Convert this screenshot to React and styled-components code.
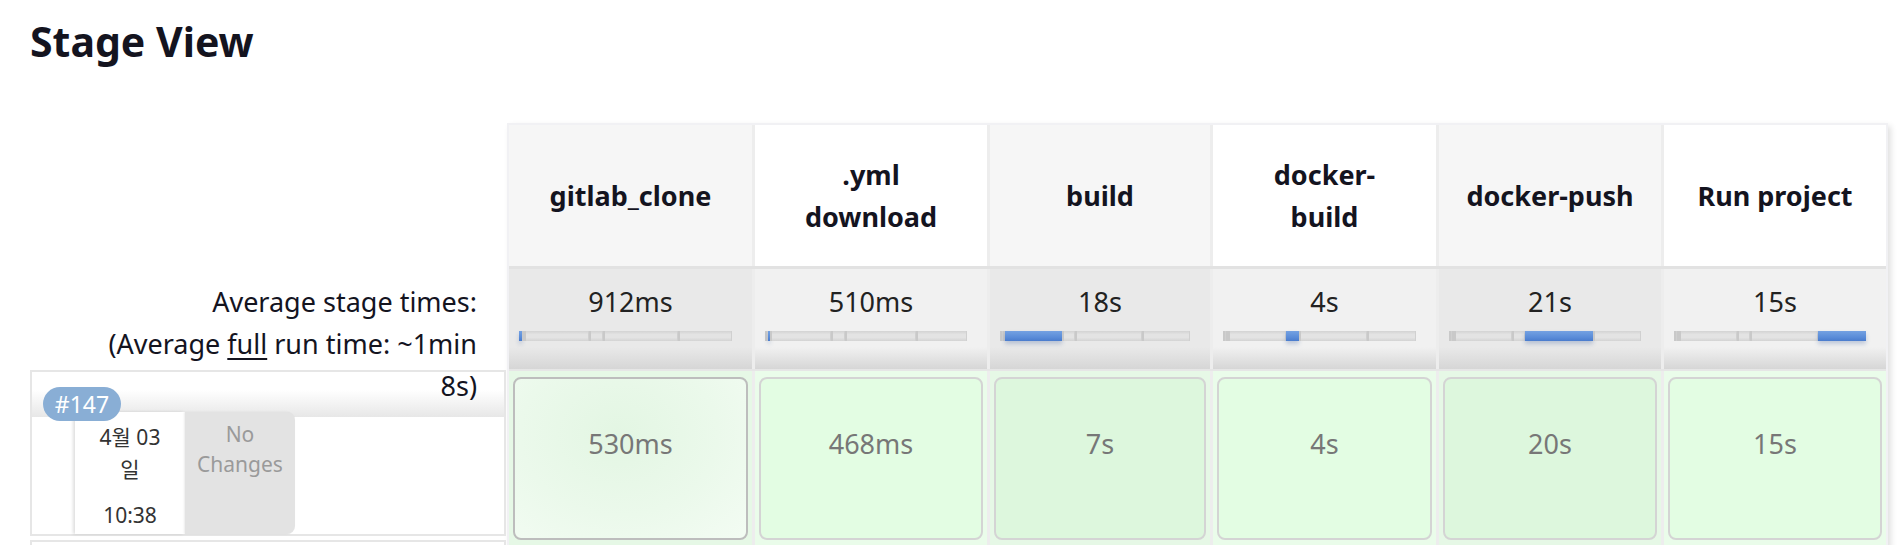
import React from 'react';
import styled, { createGlobalStyle, css } from 'styled-components';

const GlobalStyle = createGlobalStyle`
    body {
        margin: 0;
        background: #fff;
        font-family: "Noto Sans", "Noto Sans CJK KR", sans-serif;
        color: #14141f;
    }
`;

// head: how the stage name wraps in the header (the original column is just narrow enough)
const stages = [
    { name: 'gitlab_clone', head: ['gitlab_clone'], avg: '912ms', ms: 912, run: '530ms', width: 243 },
    { name: '.yml download', head: ['.yml', 'download'], avg: '510ms', ms: 510, run: '468ms', width: 232 },
    { name: 'build', head: ['build'], avg: '18s', ms: 18000, run: '7s', width: 220 },
    { name: 'docker-build', head: ['docker-', 'build'], avg: '4s', ms: 4000, run: '4s', width: 223 },
    { name: 'docker-push', head: ['docker-push'], avg: '21s', ms: 21000, run: '20s', width: 222 },
    { name: 'Run project', head: ['Run project'], avg: '15s', ms: 15000, run: '15s', width: 222 },
];

const total = stages.reduce((sum, s) => sum + s.ms, 0);

const columns = css`
    display: grid;
    grid-template-columns: ${stages.map(s => s.width + 'px').join(' ')};
    column-gap: 3px;
`;

let Page = styled.div`
    padding: 17px 0 0 30px;
`;

let Title = styled.h2`
    margin: 0;
    font-size: 41px;
    line-height: 48px;
    font-weight: 700;
`;

let Body = styled.div`
    display: flex;
    align-items: flex-start;
    margin-top: 58px;
`;

let Left = styled.div`
    flex: none;
    width: 477px;
    display: flex;
    flex-direction: column;
`;

let Spacer = styled.div`
    height: 146px;
`;

let AvgLabel = styled.div`
    position: relative;
    z-index: 1;
    height: 100px;
    box-sizing: border-box;
    padding: 12px 30px 0 0;
    text-align: right;
    font-size: 27px;
    line-height: 42px;
    white-space: nowrap;

    u { text-decoration-thickness: 2px; text-underline-offset: 4px; }
`;

let History = styled.div`
    position: relative;
    margin: 1px 1px 0 0;
    height: 166px;
    box-sizing: border-box;
    border: 2px solid #e6e6e6;
`;

let NextHistory = styled(History)`
    margin-top: 4px;
    height: 60px;
`;

let Strip = styled.div`
    height: 45px;
    background: linear-gradient(to bottom, #fff 0%, #fff 40%, #e7e7e7 100%);
`;

let HistoryBody = styled.div`
    display: flex;
    margin-top: -5px;
    padding-left: 43px;
    height: 122px;
`;

let DateCell = styled.div`
    width: 110px;
    background: #fff;
    box-shadow: -2px 0 3px rgba(0, 0, 0, 0.13);
    padding-top: 9px;
    text-align: center;
    font-size: 21px;
    line-height: 32px;
    color: #333;
`;

let Time = styled.div`
    margin-top: 14px;
`;

let ChangesCell = styled.div`
    width: 110px;
    background: #e3e3e3;
    border-radius: 0 8px 8px 0;
    box-shadow: -1px 0 2px rgba(0, 0, 0, 0.08);
    padding-top: 7px;
    text-align: center;
    font-size: 21px;
    line-height: 30px;
    color: #9a9a9a;
`;

let Badge = styled.div`
    position: absolute;
    z-index: 2;
    left: 11px;
    top: 15px;
    width: 78px;
    height: 34px;
    border-radius: 17px;
    background: #89aed5;
    color: #fff;
    font-size: 23px;
    line-height: 34px;
    text-align: center;
`;

let Table = styled.div`
    flex: none;
    border: 2px solid #f1f1f4;
    background: #ededed;
    box-shadow: 3px 3px 6px rgba(0, 0, 0, 0.12);
`;

let HeaderRow = styled.div`
    ${columns}
    height: 141px;
    border-bottom: 3px solid #e2e2e2;
`;

let HeaderCell = styled.div`
    display: flex;
    flex-direction: column;
    align-items: center;
    justify-content: center;
    padding: 0 22px;
    background: ${props => props.$odd ? '#f6f6f6' : '#fff'};
    text-align: center;
    font-size: 27px;
    font-weight: 700;
    line-height: 42px;
`;

let AvgRow = styled.div`
    ${columns}
    height: 100px;
    border-bottom: 2px solid #e6e6e6;
`;

let AvgCell = styled.div`
    padding-top: 15px;
    background: ${props => {
        let base = props.$odd ? '#e9e9e9' : '#f1f1f1';
        return `linear-gradient(to bottom, ${base} 0%, ${base} 78%, #d6d6d6 100%)`;
    }};
    text-align: center;
    font-size: 27px;
    line-height: 36px;
    color: #222;
`;

let Bar = styled.div`
    display: flex;
    height: 10px;
    margin: 11px 20px 0 10px;
`;

let Segment = styled.div`
    height: 100%;
    ${props => props.$active
        ? css`
            background: linear-gradient(to bottom, #74a1e2 0%, #5b8dd9 60%, #4a7ccd 100%);
            box-shadow: 0 3px 4px rgba(40, 80, 150, 0.25);
        `
        : css`
            background: linear-gradient(to bottom, #d3d3d3 0%, #e3e3e3 35%, #e3e3e3 65%, #d3d3d3 100%);
            box-shadow: inset 2px 0 0 #c9c9c9, inset -1px 0 0 #d0d0d0;
        `}
`;

let BuildRow = styled.div`
    ${columns}
    height: 175px;
`;

let StageCell = styled.div`
    padding: 6px 4px 0 4px;
    background: ${props => props.$odd ? '#e6f8e6' : '#eafcea'};
`;

let Card = styled.div`
    height: 163px;
    box-sizing: border-box;
    padding-top: 47px;
    border: 2px solid ${props => props.$selected ? '#bdbdbd' : '#d4d4d4'};
    border-radius: 8px;
    background: ${props => props.$selected
        ? 'radial-gradient(ellipse at 45% 35%, #e3f6e3 0%, #ebf9eb 55%, #f3fcf3 100%)'
        : props.$odd ? '#ddf7dd' : '#e3fde3'};
    text-align: center;
    font-size: 27px;
    line-height: 36px;
    color: #777;
`;

function ProgressBar({ index }) {
    return (
        <Bar>
            {stages.map((s, i) => (
                <Segment key={s.name} $active={i === index} style={{ width: (s.ms / total * 100) + '%' }} />
            ))}
        </Bar>
    );
}

function App() {
    return (
        <Page>
            <GlobalStyle />
            <Title>Stage View</Title>

            <Body>
                <Left>
                    <Spacer />
                    <AvgLabel>
                        <div>Average stage times:</div>
                        <div>(Average <u>full</u> run time: ~1min</div>
                        <div>8s)</div>
                    </AvgLabel>

                    <History>
                        <Badge>#147</Badge>
                        <Strip />
                        <HistoryBody>
                            <DateCell>
                                <div>4월 03</div>
                                <div>일</div>
                                <Time>10:38</Time>
                            </DateCell>
                            <ChangesCell>No<br />Changes</ChangesCell>
                        </HistoryBody>
                    </History>
                    <NextHistory />
                </Left>

                <Table>
                    <HeaderRow>
                        {stages.map((s, i) => (
                            <HeaderCell key={s.name} $odd={i % 2 === 0}>
                                {s.head.map(line => <div key={line}>{line}</div>)}
                            </HeaderCell>
                        ))}
                    </HeaderRow>
                    <AvgRow>
                        {stages.map((s, i) => (
                            <AvgCell key={s.name} $odd={i % 2 === 0}>
                                {s.avg}
                                <ProgressBar index={i} />
                            </AvgCell>
                        ))}
                    </AvgRow>
                    <BuildRow>
                        {stages.map((s, i) => (
                            <StageCell key={s.name} $odd={i % 2 === 0}>
                                <Card $odd={i === 2 || i === 4} $selected={i === 0}>{s.run}</Card>
                            </StageCell>
                        ))}
                    </BuildRow>
                </Table>
            </Body>
        </Page>
    );
}

export default App;
